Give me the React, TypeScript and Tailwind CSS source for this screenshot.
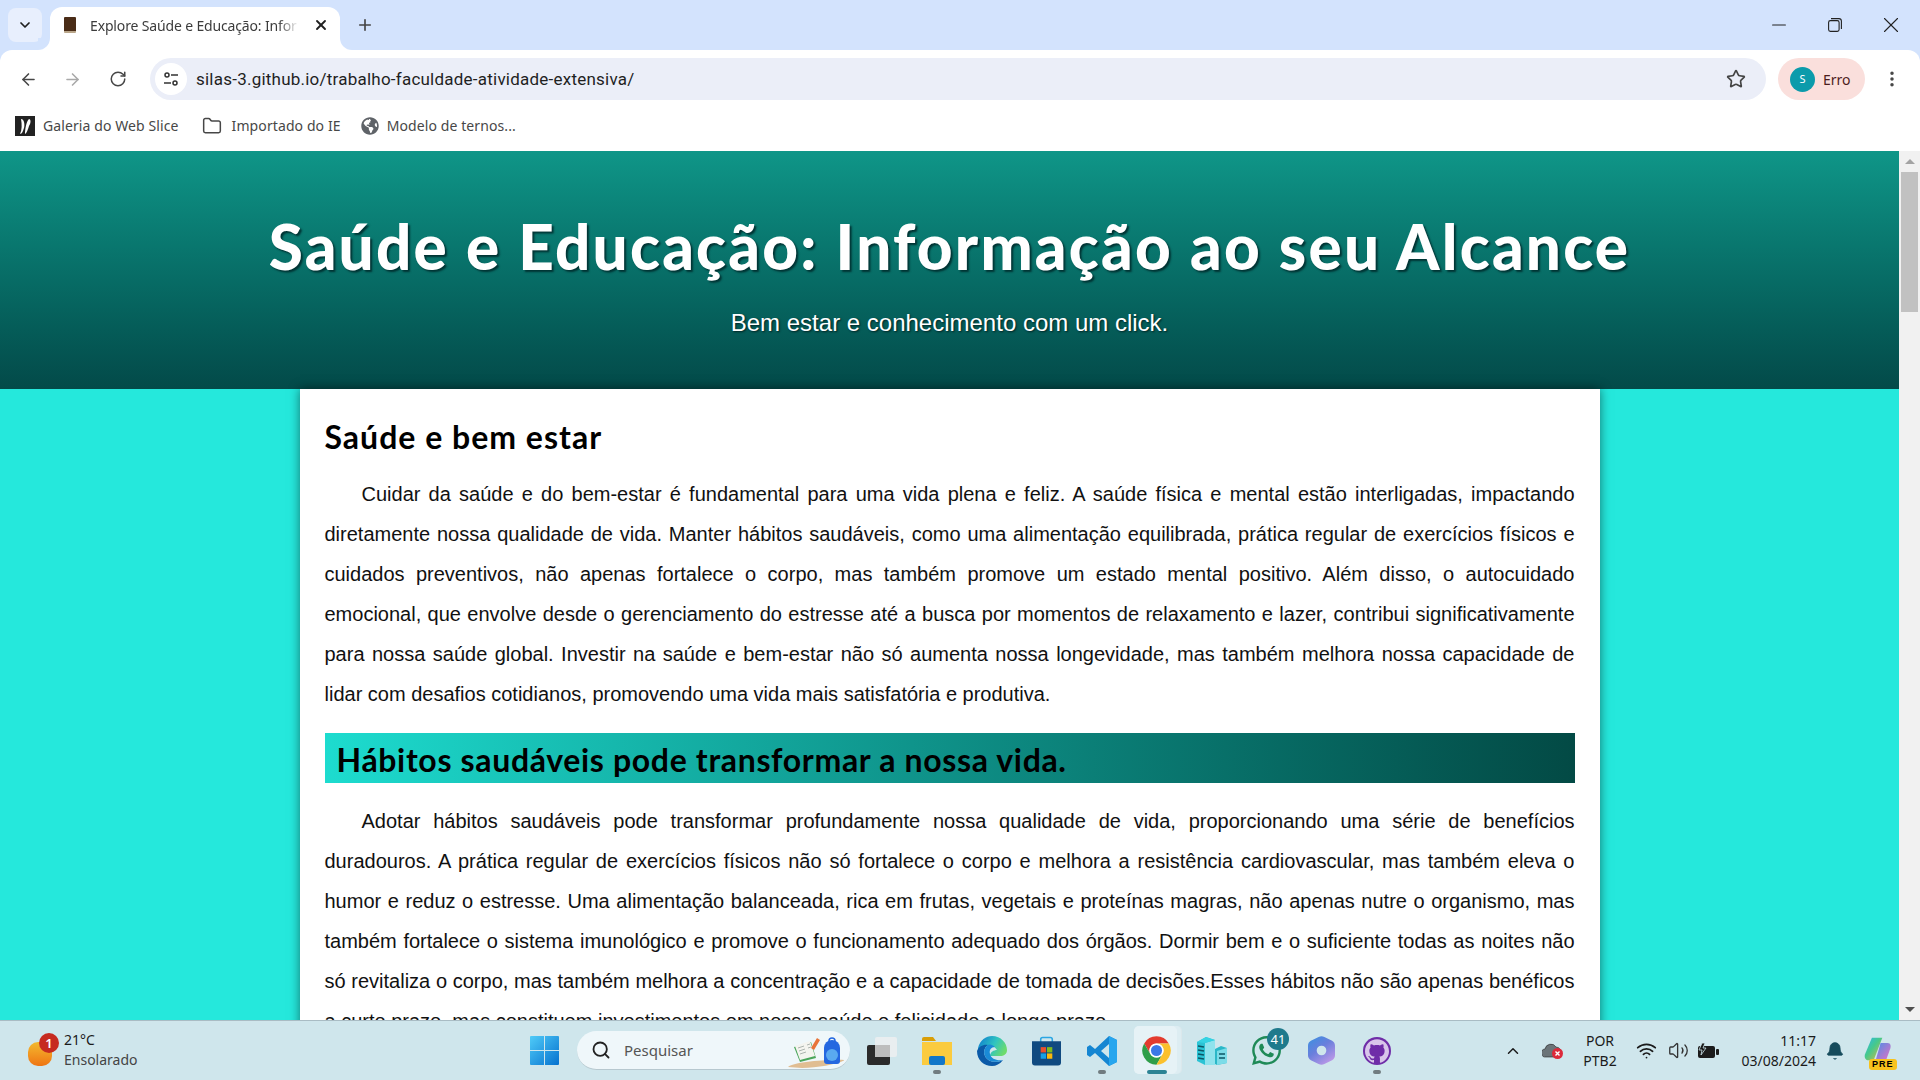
import { ArrowLeft, ArrowRight, ChevronDown, ChevronUp, Folder, Plus, RotateCw, Search, Star, X, MoreVertical, Minus, Bell, Wifi, Volume2 } from "lucide-react"
import { FaGlobeAmericas, FaWhatsapp } from "react-icons/fa"
import { SiGithub } from "react-icons/si"

const uiFont = "font-['Noto_Sans',sans-serif]"
const titleFont = "font-['Lato',sans-serif]"

function ChromeIcon() {
  return (
    <svg viewBox="0 0 24 24" className="w-[31px] h-[31px]">
      <path d="M2.47 6.5A11 11 0 0 1 21.53 6.5H12A5.5 5.5 0 0 0 7.24 14.75Z" fill="#e33b2e" />
      <path d="M2.47 6.5A11 11 0 0 0 12 23L16.76 14.75A5.5 5.5 0 0 1 7.24 14.75Z" fill="#2f9e49" />
      <path d="M12 23A11 11 0 0 0 21.53 6.5H12A5.5 5.5 0 0 1 16.76 14.75Z" fill="#fbc02d" />
      <circle cx="12" cy="12" r="5.5" fill="#fff" />
      <circle cx="12" cy="12" r="4.3" fill="#3b78e7" />
    </svg>
  )
}

function WindowsIcon() {
  return (
    <svg viewBox="0 0 29 29" className="w-[29px] h-[29px]">
      <defs>
        <linearGradient id="win" x1="0" y1="0" x2="1" y2="1">
          <stop offset="0" stopColor="#4fcbf8" />
          <stop offset="1" stopColor="#0672cf" />
        </linearGradient>
      </defs>
      <path d="M1 0H14V14H0V1A1 1 0 0 1 1 0ZM15 0H28A1 1 0 0 1 29 1V14H15ZM0 15H14V29H1A1 1 0 0 1 0 28ZM15 15H29V28A1 1 0 0 1 28 29H15Z" fill="url(#win)" />
    </svg>
  )
}

function TaskViewIcon() {
  return (
    <svg viewBox="0 0 30 28" className="w-[30px] h-[28px]">
      <rect x="0" y="8" width="23" height="20" rx="2" fill="#2b2b2b" />
      <rect x="8" y="0" width="22" height="20" rx="2" fill="#e9eef0" />
      <rect x="8" y="8" width="15" height="12" fill="#bdbdbd" />
    </svg>
  )
}

function FilesIcon() {
  return (
    <svg viewBox="0 0 30 28" className="w-[30px] h-[28px]">
      <path d="M0 2A2 2 0 0 1 2 0H11L14 4H0Z" fill="#d99e07" />
      <path d="M0 5H30V28H0Z" fill="#fbcb3f" />
      <rect x="7" y="19" width="16" height="9" rx="2" fill="#1277c9" />
    </svg>
  )
}

function EdgeIcon() {
  return (
    <svg viewBox="0 0 30 30" className="w-[30px] h-[30px]">
      <defs>
        <linearGradient id="edge" x1="0" y1="0.2" x2="1" y2="0.6">
          <stop offset="0" stopColor="#0f7fd0" />
          <stop offset="0.55" stopColor="#2fc4c0" />
          <stop offset="1" stopColor="#6fdc6a" />
        </linearGradient>
      </defs>
      <path d="M1 12C3 4 9 0 15 0C24 0 30 7 30 14C30 18 27 20 23 20H13C13 16 17 14 20 14C18 10 14 9 10 10C6 11 3 13 1 17Z" fill="url(#edge)" />
      <path d="M0 15C2 10 7 8 11 9C8 11 6 15 8 20C10 25 18 28 26 24C23 28 19 30 15 30C7 30 0 24 0 15Z" fill="#0b5aa8" />
      <path d="M11 9C8 11 6 15 8 20C10 25 18 28 26 24C20 25 14 23 13 18C12 14 14 11 18 11C16 9 13 8 11 9Z" fill="#1a8ad6" />
    </svg>
  )
}

function StoreIcon() {
  return (
    <svg viewBox="0 0 30 30" className="w-[29px] h-[30px]">
      <path d="M9 6V3A2 2 0 0 1 11 1H19A2 2 0 0 1 21 3V6" fill="none" stroke="#2ba6e3" strokeWidth="1.6" />
      <path d="M0 5H30V27A3 3 0 0 1 27 30H3A3 3 0 0 1 0 27Z" fill="#104a80" />
      <rect x="9" y="11" width="5.5" height="5.5" fill="#e8502c" />
      <rect x="15.5" y="11" width="5.5" height="5.5" fill="#7fba1c" />
      <rect x="9" y="17.5" width="5.5" height="5.5" fill="#14a0e6" />
      <rect x="15.5" y="17.5" width="5.5" height="5.5" fill="#fbb90a" />
    </svg>
  )
}

function VsCodeIcon() {
  return (
    <svg viewBox="0 0 30 30" className="w-[30px] h-[30px]">
      <path d="M22 0L30 4V26L22 30L8 17L3 21L0 19V11L3 9L8 13ZM22 8L14 15L22 22Z" fill="#1586d2" />
      <path d="M22 0L30 4V26L22 30Z" fill="#27a6ee" />
    </svg>
  )
}

function ServersIcon() {
  return (
    <svg viewBox="0 0 30 28" className="w-[30px] h-[28px]">
      <path d="M0 5L9 0L18 3V28L8 28L0 24Z" fill="#2cc3d4" />
      <path d="M8 6L18 3V28H8Z" fill="#8fe3ed" />
      <path d="M0 5L9 0L18 3L8 6Z" fill="#36d3e3" />
      <path d="M1 9L7 10M1 13L7 14M1 17L7 18M1 21L7 22" stroke="#0d5565" strokeWidth="1.4" />
      <path d="M18 12L24 9L30 11V26L20 28L18 27Z" fill="#2bb8c8" />
      <path d="M20 14L30 11V26L20 28Z" fill="#7cdce8" />
      <path d="M22 17H28M22 21H28" stroke="#0d5565" strokeWidth="1.4" />
    </svg>
  )
}

function M365Icon() {
  return (
    <svg viewBox="0 0 28 30" className="w-[27px] h-[29px]">
      <defs>
        <linearGradient id="m365" x1="0.1" y1="0" x2="0.8" y2="1">
          <stop offset="0" stopColor="#3d8fe0" />
          <stop offset="0.45" stopColor="#6a7fdc" />
          <stop offset="1" stopColor="#c39ae8" />
        </linearGradient>
      </defs>
      <path fillRule="evenodd" d="M11 1C13 0 15 0 17 1L25 5C27 6 28 8 28 10V20C28 22 27 24 25 25L17 29C15 30 13 30 11 29L3 25C1 24 0 22 0 20V10C0 8 1 6 3 5ZM14 10A5 5 0 1 0 14.01 20A5 5 0 0 0 14 10Z" fill="url(#m365)" />
    </svg>
  )
}

function CopilotIcon() {
  return (
    <div className="relative w-[30px] h-[30px]">
      <svg viewBox="0 0 30 30" className="w-[30px] h-[26px]">
        <defs>
          <linearGradient id="cop" x1="0" y1="0" x2="1" y2="1">
            <stop offset="0" stopColor="#2bb5f0" />
            <stop offset="0.45" stopColor="#46c98b" />
            <stop offset="1" stopColor="#e6b73a" />
          </linearGradient>
          <linearGradient id="cop2" x1="0" y1="0" x2="1" y2="1">
            <stop offset="0" stopColor="#4a8ee8" />
            <stop offset="1" stopColor="#e86fc2" />
          </linearGradient>
        </defs>
        <path d="M8 2H20L10 28H4C0 28 -1 24 0 21Z" fill="url(#cop)" />
        <path d="M18 8H26C30 8 30 12 29 15L25 26C24 28 22 29 20 29H12Z" fill="url(#cop2)" />
      </svg>
      <span className="absolute -bottom-[4px] left-[6px] bg-[#f8c21c] rounded-[3px] px-[3px] text-[9px] leading-[11px] font-bold text-black tracking-[1px] font-['Liberation_Sans',sans-serif]">PRE</span>
    </div>
  )
}

function TaskItem({ children, dot, className }: { children: React.ReactNode; dot?: boolean; className?: string }) {
  return (
    <div className={`relative w-[55px] h-[59px] flex items-center justify-center ${className ?? ""}`}>
      {children}
      {dot && <span className="absolute bottom-[6px] left-1/2 -translate-x-1/2 w-[8px] h-[4px] rounded-full bg-[#717c80]" />}
    </div>
  )
}

function BrowserChrome() {
  return (
    <div className={`bg-[#d3e3fd] ${uiFont}`}>
      <div className="h-[50px] flex items-end text-[#1f1f1f] relative">
        <div className="absolute left-[8px] top-[8px] w-[34px] h-[34px] rounded-[8px] bg-[#e8effd] flex items-center justify-center">
          <ChevronDown size={16} strokeWidth={2.6} />
        </div>
        <div className="ml-[50px] w-[290px] h-[43px] bg-white rounded-t-[12px] flex items-center pl-[14px] pb-[7px] relative">
          <div className="absolute -left-[12px] bottom-0 w-[12px] h-[12px] bg-white">
            <div className="w-[12px] h-[12px] bg-[#d3e3fd] rounded-br-[12px]" />
          </div>
          <div className="absolute -right-[12px] bottom-0 w-[12px] h-[12px] bg-white">
            <div className="w-[12px] h-[12px] bg-[#d3e3fd] rounded-bl-[12px]" />
          </div>
          <div className="w-[12px] h-[16px] bg-[#4a2c17] rounded-[1px] border-b-2 border-[#b9a68a] shrink-0" />
          <span className="ml-[14px] w-[209px] text-[14px] tracking-[-0.15px] text-[#3c3c3c] whitespace-nowrap [mask-image:linear-gradient(to_right,black_90%,transparent)]">Explore Saúde e Educação: Infor</span>
          <X size={16} strokeWidth={2.8} className="ml-[14px] shrink-0" />
        </div>
        <Plus size={18} strokeWidth={2.2} className="ml-[16px] mb-[16px] text-[#444]" />
        <div className="ml-auto flex items-start h-[50px] text-[#222] pr-px">
          <div className="w-[56px] h-[49px] flex items-center justify-center"><Minus size={22} strokeWidth={1.1} /></div>
          <div className="w-[56px] h-[49px] flex items-center justify-center">
            <svg viewBox="0 0 14 14" className="w-[14px] h-[14px]" fill="none" stroke="#222" strokeWidth="1.1">
              <rect x="0.6" y="2.6" width="10.5" height="10.8" rx="1.8" />
              <path d="M3 0.6H11A2.5 2.5 0 0 1 13.4 3V11" />
            </svg>
          </div>
          <div className="w-[56px] h-[49px] flex items-center justify-center"><X size={26} strokeWidth={1} /></div>
        </div>
      </div>
      <div className="bg-white rounded-t-[12px] h-[50px] pt-[8px] flex items-center text-[#474747]">
        <ArrowLeft size={19} strokeWidth={2} className="ml-[19px]" />
        <ArrowRight size={19} strokeWidth={2} className="ml-[25px] text-[#a9a9a9]" />
        <RotateCw size={18} strokeWidth={2} className="ml-[27px]" />
        <div className="ml-[23px] w-[1616px] h-[42px] rounded-full bg-[#ebeef8] flex items-center pl-[5px] pr-[20px]">
          <div className="w-[32px] h-[32px] rounded-full bg-white flex items-center justify-center">
            <svg viewBox="0 0 16 16" className="w-[16px] h-[16px]" fill="none" stroke="#333" strokeWidth="1.5">
              <circle cx="4" cy="4" r="2" />
              <path d="M8 4H15M1 12H8" />
              <circle cx="12" cy="12" r="2" />
            </svg>
          </div>
          <span className="ml-[9px] pt-[2px] text-[17px] text-[#1f1f1f] font-['Roboto',sans-serif] tracking-[0.23px]">silas-3.github.io/trabalho-faculdade-atividade-extensiva/</span>
          <Star size={20} strokeWidth={2} className="ml-auto text-[#444]" />
        </div>
        <div className="ml-[12px] w-[87px] h-[42px] rounded-full bg-[#fadfdc] flex items-center pl-[12px]">
          <div className="w-[25px] h-[25px] rounded-full bg-[#0b9bab] text-white text-[11px] flex items-center justify-center">S</div>
          <span className="ml-[8px] text-[14px] text-[#4c1d1d]">Erro</span>
        </div>
        <MoreVertical size={20} strokeWidth={2.2} className="ml-[17px]" />
      </div>
      <div className="bg-white h-[51px] flex items-center text-[14px] tracking-[0.1px] text-[#474747] pl-[15px]">
        <div className="w-[20px] h-[20px] bg-[#222] flex items-center justify-center">
          <svg viewBox="0 0 20 20" className="w-[20px] h-[20px]" fill="#fff">
            <path d="M6 3C9 3 10 8 9 12C8 15 7 18 5 18C7 14 7 8 6 3ZM14 3C16 3 16 7 14 10C13 13 12 17 10 18C10 14 11 6 14 3Z" />
          </svg>
        </div>
        <span className="ml-[8px]">Galeria do Web Slice</span>
        <Folder size={20} strokeWidth={1.8} className="ml-[23px]" />
        <span className="ml-[10px]">Importado do IE</span>
        <FaGlobeAmericas size={18} className="ml-[20px] text-[#5f6368]" />
        <span className="ml-[8px]">Modelo de ternos...</span>
      </div>
    </div>
  )
}

function Taskbar() {
  return (
    <div className={`h-[60px] shrink-0 bg-[#cfe6ec] border-t border-[#a9bcc4] flex items-center text-[#1b1b1b] relative z-10 ${uiFont}`}>
      <div className="w-[517px] flex items-center pl-[28px] shrink-0">
        <div className="relative w-[24px] h-[24px] rounded-[10px] bg-gradient-to-b from-[#f2b92f] to-[#ee7412] mt-[6px]">
          <span className="absolute -top-[9px] left-[11px] w-[20px] h-[20px] rounded-full bg-[#c62b20] text-white text-[13px] leading-[20px] text-center font-semibold">1</span>
        </div>
        <div className="ml-[12px] mb-[2px] text-[14px] leading-[20px]">
          <div>21°C</div>
          <div className="text-[#444]">Ensolarado</div>
        </div>
      </div>
      <TaskItem><WindowsIcon /></TaskItem>
      <div className="ml-[5px] mr-[4px] w-[273px] h-[39px] rounded-full bg-[#eff7fa] border-b border-[#b7c8cf] flex items-center pl-[14px] relative">
        <Search size={20} strokeWidth={2.2} className="text-[#222]" />
        <span className="ml-[13px] text-[15px] text-[#555]">Pesquisar</span>
        <div className="absolute right-[6px] bottom-[1px] w-[56px] h-[32px]">
          <svg viewBox="0 0 56 32" className="w-[56px] h-[32px]">
            <path d="M0 31C6 25 50 23 57 24C50 28 30 32 14 32Z" fill="#e0bd92" />
            <path d="M6 11L23 6L28 22L12 26Z" fill="#4aa65a" />
            <path d="M7 10L22 5L27 20L12 24Z" fill="#f4f4ef" />
            <path d="M10 12L16 10M11 15L17 13M12 18L18 16M19 9L22 8M20 12L23 11" stroke="#9aa5a0" strokeWidth="0.8" />
            <path d="M23 12L29 2L32 4L26 14Z" fill="#e8753a" />
            <path d="M36 12A8 8 0 0 1 52 12V25A3 3 0 0 1 49 28H39A3 3 0 0 1 36 25Z" fill="#2467e0" />
            <circle cx="44" cy="19" r="6" fill="#5aa9f0" />
            <path d="M41 5A3 3 0 0 1 47 5" fill="none" stroke="#2467e0" strokeWidth="1.5" />
          </svg>
        </div>
      </div>
      <TaskItem><TaskViewIcon /></TaskItem>
      <TaskItem dot><FilesIcon /></TaskItem>
      <TaskItem><EdgeIcon /></TaskItem>
      <TaskItem><StoreIcon /></TaskItem>
      <TaskItem dot><VsCodeIcon /></TaskItem>
      <TaskItem>
        <div className="absolute left-[5px] top-[5px] w-[48px] h-[48px] rounded-[5px] bg-[#e2f0f5]/70 border-r border-[#dbe8ec]" />
        <div className="absolute left-[5px] top-[5px] w-[43px] h-[48px] rounded-[5px] bg-[#e6f2f6]" />
        <div className="relative"><ChromeIcon /></div>
        <span className="absolute bottom-[6px] left-[18px] w-[20px] h-[4px] rounded-full bg-[#2c8394]" />
      </TaskItem>
      <TaskItem><ServersIcon /></TaskItem>
      <TaskItem>
        <FaWhatsapp size={33} className="text-[#1f8a57]" />
        <span className="absolute top-[7px] left-[28px] w-[22px] h-[22px] rounded-full bg-[#1f7a8c] text-white text-[13px] leading-[22px] text-center">41</span>
      </TaskItem>
      <TaskItem><M365Icon /></TaskItem>
      <TaskItem dot>
        <div className="w-[28px] h-[28px] rounded-full bg-[#6f2da8] flex items-center justify-center">
          <SiGithub size={24} className="text-[#d9c6ea]" />
        </div>
      </TaskItem>
      <div className="ml-auto flex items-center pr-[27px]">
        <ChevronUp size={18} strokeWidth={2} />
        <svg viewBox="0 0 22 16" className="ml-[20px] w-[22px] h-[16px]">
          <path d="M4 14A4 4 0 0 1 3 6A6 6 0 0 1 14 4A5 5 0 0 1 18 12V14Z" fill="#6b7478" stroke="#222" strokeWidth="0.6" />
          <circle cx="15.5" cy="10.5" r="5.5" fill="#dc2a3a" />
          <path d="M13.5 8.5L17.5 12.5M17.5 8.5L13.5 12.5" stroke="#fff" strokeWidth="1.4" />
        </svg>
        <div className="ml-[11px] w-[50px] text-center text-[14px] leading-[20px]">
          <div>POR</div>
          <div>PTB2</div>
        </div>
        <Wifi size={21} strokeWidth={2} className="ml-[11px]" />
        <Volume2 size={21} strokeWidth={1.5} className="ml-[11px] text-[#333]" />
        <svg viewBox="0 0 22 16" className="ml-[8px] w-[22px] h-[16px]">
          <rect x="1" y="3" width="17" height="12" rx="2" fill="#1b1b1b" />
          <rect x="19" y="6" width="3" height="6" rx="1" fill="#1b1b1b" />
          <path d="M5 0L2 7H5L4 12L9 5H6L8 0Z" fill="#1b1b1b" stroke="#cfe6ec" strokeWidth="0.8" />
        </svg>
        <div className="ml-[20px] w-[77px] text-right text-[14px] leading-[20px] whitespace-nowrap">
          <div>11:17</div>
          <div>03/08/2024</div>
        </div>
        <Bell size={20} fill="#164b5c" strokeWidth={1} className="ml-[9px] text-[#164b5c]" />
        <div className="ml-[18px]"><CopilotIcon /></div>
      </div>
    </div>
  )
}

function Scrollbar() {
  return (
    <div className="w-[21px] shrink-0 bg-[#f1f1f1] flex flex-col items-center">
      <div className="h-[21px] flex items-center justify-center shrink-0">
        <div className="w-0 h-0 border-x-[5px] border-x-transparent border-b-[5px] border-b-[#a3a3a3]" />
      </div>
      <div className="w-[17px] h-[140px] bg-[#c1c1c1] shrink-0" />
      <div className="mt-auto h-[21px] flex items-center justify-center shrink-0">
        <div className="w-0 h-0 border-x-[5px] border-x-transparent border-t-[5px] border-t-[#505050]" />
      </div>
    </div>
  )
}

export default function App() {
  return (
    <div className="h-screen flex flex-col overflow-hidden">
      <BrowserChrome />
      <div className="flex-1 min-h-0 flex">
        <div className="flex-1 min-w-0 bg-[#25e8dc] overflow-hidden font-['Liberation_Sans',sans-serif]">
          <header className="h-[238px] pt-[59px] text-center text-white bg-gradient-to-b from-[#0f9688] to-[#034a49]">
            <h1 className={`${titleFont} text-[62px] leading-[72px] font-black tracking-[2.2px] [text-shadow:2px_2px_2px_#033]`}>
              Saúde e Educação: Informação ao seu Alcance
            </h1>
            <p className="mt-[25px] text-[24px] leading-[32px] [text-shadow:1px_1px_2px_#022]">
              Bem estar e conhecimento com um click.
            </p>
          </header>
          <main className="w-[1300px] mx-auto bg-white px-[25px] pt-[28px] shadow-[0_0_10px_rgba(0,0,0,0.5)] text-[20px] leading-[40px] text-[#111]">
            <h2 className={`${titleFont} text-[32px] leading-[40px] font-bold text-black tracking-[1px]`}>Saúde e bem estar</h2>
            <p className="mt-[17px] text-justify indent-[37px]">
              Cuidar da saúde e do bem-estar é fundamental para uma vida plena e feliz. A saúde física e mental estão interligadas, impactando diretamente nossa qualidade de vida. Manter hábitos saudáveis, como uma alimentação equilibrada, prática regular de exercícios físicos e cuidados preventivos, não apenas fortalece o corpo, mas também promove um estado mental positivo. Além disso, o autocuidado emocional, que envolve desde o gerenciamento do estresse até a busca por momentos de relaxamento e lazer, contribui significativamente para nossa saúde global. Investir na saúde e bem-estar não só aumenta nossa longevidade, mas também melhora nossa capacidade de lidar com desafios cotidianos, promovendo uma vida mais satisfatória e produtiva.
            </p>
            <h2 className={`${titleFont} mt-[19px] h-[50px] pl-[12px] pt-[4px] text-[32px] leading-[46px] font-bold text-black tracking-[0.66px] bg-gradient-to-r from-[#1ddccf] to-[#034a45]`}>
              Hábitos saudáveis pode transformar a nossa vida.
            </h2>
            <p className="mt-[18px] text-justify indent-[37px]">
              Adotar hábitos saudáveis pode transformar profundamente nossa qualidade de vida, proporcionando uma série de benefícios duradouros. A prática regular de exercícios físicos não só fortalece o corpo e melhora a resistência cardiovascular, mas também eleva o humor e reduz o estresse. Uma alimentação balanceada, rica em frutas, vegetais e proteínas magras, não apenas nutre o organismo, mas também fortalece o sistema imunológico e promove o funcionamento adequado dos órgãos. Dormir bem e o suficiente todas as noites não só revitaliza o corpo, mas também melhora a concentração e a capacidade de tomada de decisões.Esses hábitos não são apenas benéficos a curto prazo, mas constituem investimentos em nossa saúde e felicidade a longo prazo.
            </p>
          </main>
        </div>
        <Scrollbar />
      </div>
      <Taskbar />
    </div>
  )
}
